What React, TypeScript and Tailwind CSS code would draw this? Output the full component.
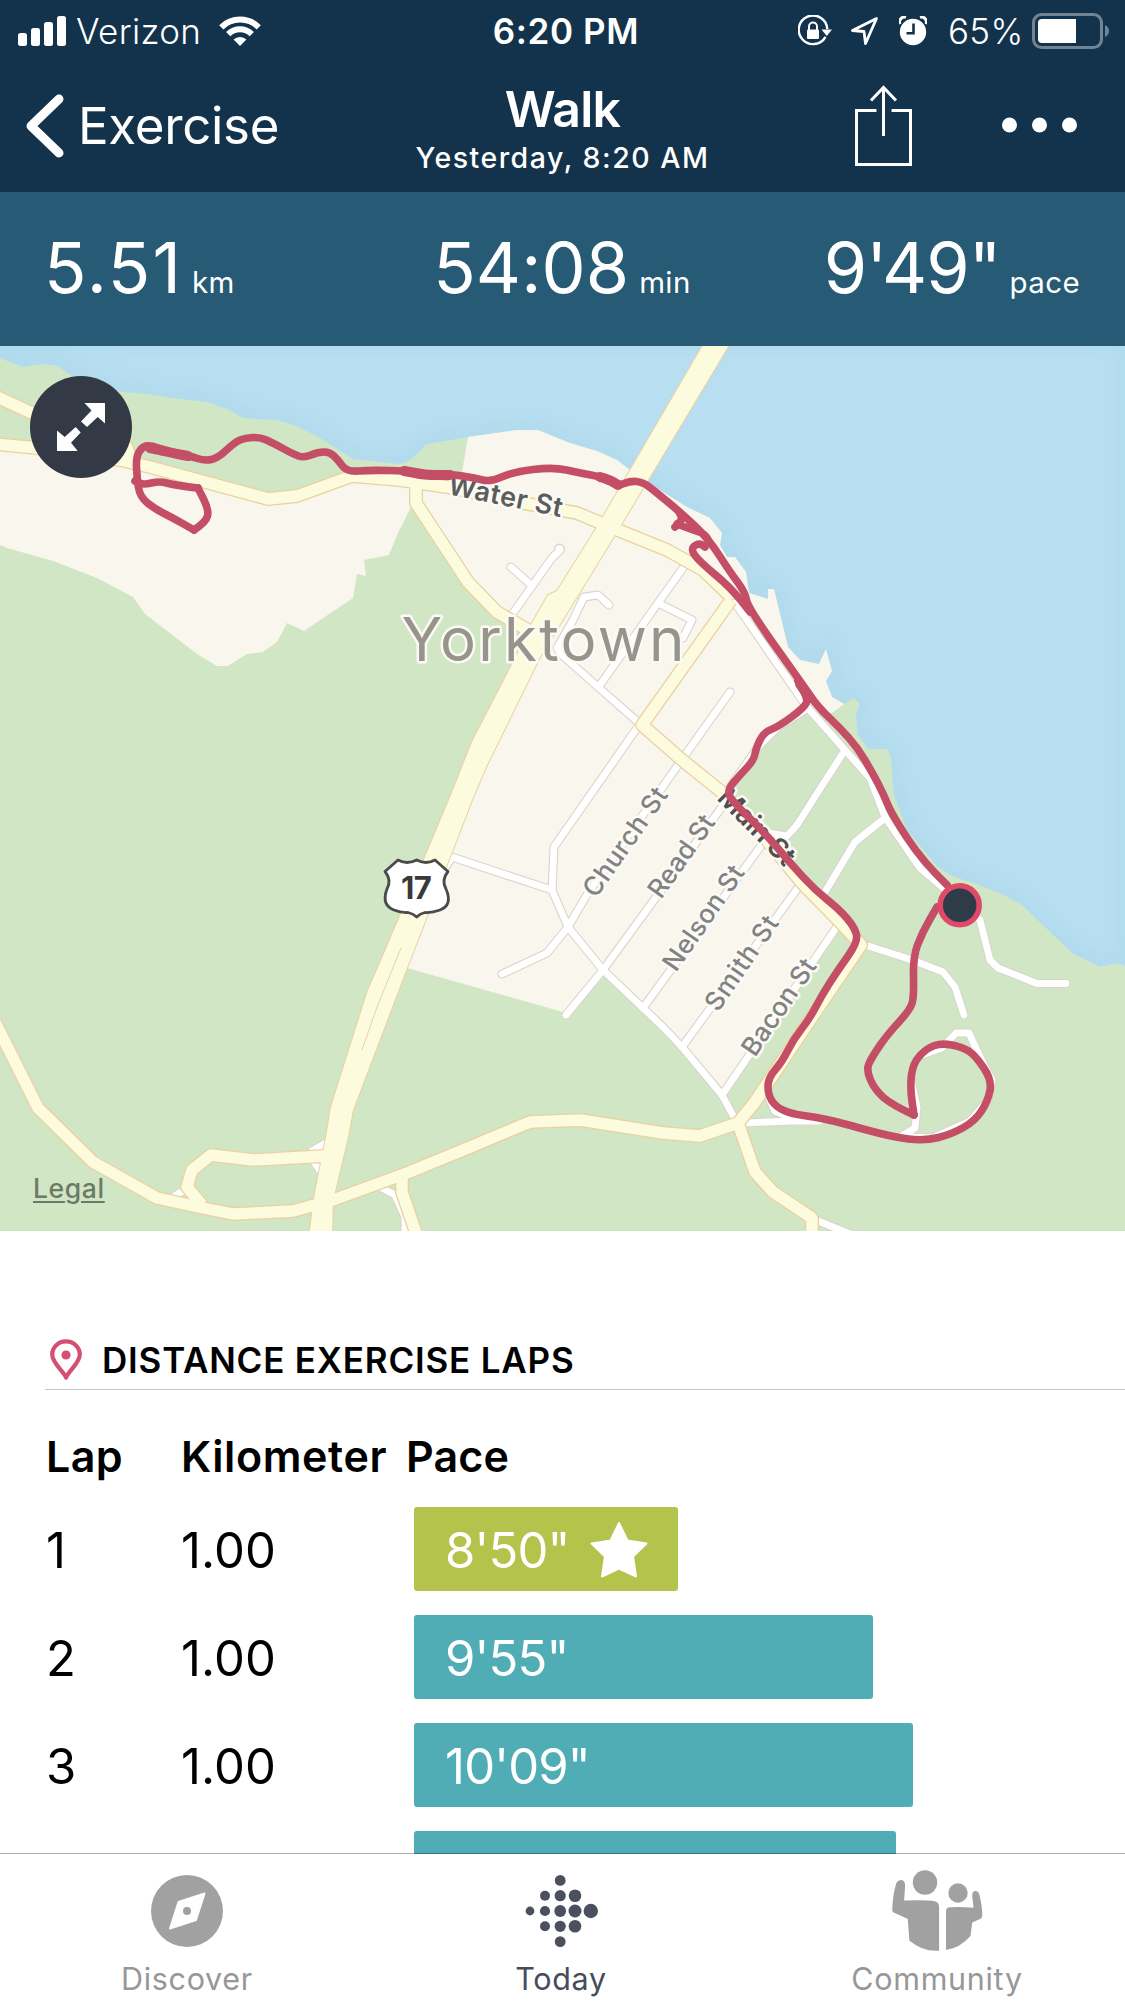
/**
 * Exercise Detail Screen
 * Summary stats, route map and lap splits for a recorded walk
 */

import type { ReactNode } from 'react';

interface Stat {
  value: string;
  unit: string;
  align: string;
  spacing: string;
}

interface Lap {
  lap: number;
  distance: string;
  pace: string;
  width: number;
  best?: boolean;
}

interface StreetLabel {
  name: string;
  x: number;
  y: number;
  angle: number;
  length: number;
}

const STATS: Stat[] = [
  { value: '5.51', unit: 'km', align: 'justify-start', spacing: 'mr-[9px] tracking-[2px]' },
  { value: '54:08', unit: 'min', align: 'justify-center', spacing: 'mr-[10px] tracking-[0.1px]' },
  { value: '9\'49"', unit: 'pace', align: 'justify-end', spacing: 'mr-[9px] tracking-[-0.9px]' },
];

const LAPS: Lap[] = [
  { lap: 1, distance: '1.00', pace: '8\'50"', width: 264, best: true },
  { lap: 2, distance: '1.00', pace: '9\'55"', width: 459 },
  { lap: 3, distance: '1.00', pace: '10\'09"', width: 499 },
];

const WATER =
  'M0 340V358L23 367L43 364L58 366L72 376L123 392L147 394L173 398L208 402L227 409L243 418L277 420L297 426L320 438L353 459L400 464L410 460L427 444L468 437L517 430L538 430L570 443L597 451L617 460L630 470L647 482L687 507L710 518L722 533L720 545L727 557L735 557L746 572L749 593L768 599V589H774L788 647L800 660L819 664L826 649L832 671L826 681L832 697L844 704L854 698L860 703L856 715L858 735L868 749L887 749L891 757L894 795L907 830L922 848L938 867L952 876L982 886L1002 894L1022 905L1045 927L1072 953L1100 967L1117 963L1130 968V340Z';

const TOWN = [
  'M0 445L120 458L268 499L298 495L353 476L412 480V505L398 533L389 555L364 560L366 576L357 574L353 598L304 631L287 623L277 642L263 652L247 654L228 666H217L197 654L145 614L133 597L97 578L53 561L7 548L0 545Z',
  'M468 437L517 430L538 430L570 443L597 451L617 460L630 470L647 482L687 507L710 518L722 533L720 545L727 557L735 557L746 572L749 593L768 599V589H774L788 647L800 660L819 664L826 649L832 671L826 681L832 697L844 704L832 713L808 710L778 730L758 748L728 790L765 840L838 927L722 1096L682 1047L643 1008L605 972L563 1012L407 968L462 795L510 670L526 630L497 612L468 582L417 503V480L462 472Z',
];

const WHITE_ROADS = [
  'M560 550L552 558L513 613',
  'M511 567L530 584',
  'M609 605L598 595L584 597L572 622L557 648L562 655L598 687L638 722',
  'M683 568L658 603L600 685',
  'M658 603L692 620L683 638',
  'M730 692L683 758L588 893L568 927L547 953L502 974',
  'M637 728L554 847L552 890L568 927L603 970L643 1008L663 1027L682 1047L722 1095L737 1123',
  'M440 876L452 857L552 890',
  'M727 800L603 970L566 1015',
  'M763 843L643 1008',
  'M800 885L682 1047',
  'M838 925L722 1095',
  'M735 603L807 707L845 750L870 778L885 817L920 868L942 887L960 902L980 920L990 960L998 968L1037 983.5H1066',
  'M845 750L818 792L797 825L787 836L770 833',
  'M885 818L855 842L825 892',
  'M808 708L778 727L758 747L728 790',
  'M865 945L912 960L943 972L955 987L964 1015',
  'M922 1055L942 1048L956 1033H969L980 1057L992 1080L988 1100L970 1121L932 1138L905 1137',
  'M911 1080L917 1107L915 1128L902 1136',
  'M745 1123L792 1121L820 1121',
  'M768 1096L775 1111L792 1118',
  'M818 1221L850 1234',
  'M173 1197L188 1188',
  'M312 1151L326 1143M312 1159L321 1172',
  'M378 1186L395 1195L405 1217V1236',
];

const YELLOW_ROADS = [
  'M-5 396L60 426L118 428L132 460',
  'M-5 444L37 448L120 460L150 467L268 499L297 496L352 476L400 480L447 487L523 503L577 513L603 524L667 550L703 570L731 597',
  'M731 600L642 725L682 760L723 793L765 838L802 883L840 922L861 945L808 1023L755 1102L738 1123L700 1136L663 1133L580 1120L530 1122L463 1150L407 1173L333 1200L293 1211L233 1214L203 1208L157 1198L93 1162L38 1108L-5 1022',
  'M738 1123L755 1172L773 1192L812 1218V1238',
  'M325 1156L253 1160L211 1155L192 1170L187 1187L202 1205',
  'M402 1177V1192L417 1236',
  'M416 485V503L468 582L497 612L528 630',
];

const HIGHWAY =
  'M706 340L597 527L557 591L548 595L532 623L518 653L472 742L451 795L425 857L380 963L368 990L331 1107L326 1137L315 1193L309 1236H332L333 1200L348 1137L353 1110L407 968L474 795L487 765L540 657L615 535L732 340Z';

// GPS traces, as plain x y pairs
const TRACKS = [
  '947 885 923 862 892 815 883 793 872 772 857 747 840 728 818 707 805 688 748 608 745 592 730 572 708 538 680 512 657 493 643 482 630 481 618 486 602 477 580 473 553 467 513 472 490 482 475 478 450 474 430 475 407 471 370 470 347 472 338 460 330 452 318 452 304 458 293 454 273 443 260 437 245 438 235 442 218 458 205 461 190 456 167 451 150 445 142 447 136 457 137 478 140 497 155 509 173 518 194 530',
  '194 530 206 522 209 510 198 488',
  '198 488 173 485 160 481 143 485 135 481',
  '675 527 683 520 679 512',
  '677 524 693 530 705 534 709 542',
  '705 547 700 542 690 549 700 562 730 587 750 612',
  '798 681 808 698 805 707 778 727 764 732 756 748 754 760 740 775 727 790 732 801 765 833 791 864 815 890 840 910 855 928 858 942 838 970 822 995 810 1018 793 1040 782 1062 768 1078 768 1095 776 1107 792 1114 815 1117 838 1122 892 1137 925 1141 952 1134 975 1121 988 1101 992 1080 975 1055 962 1047 942 1043 927 1048 913 1063 910 1087 914 1115',
  '914 1115 892 1105 875 1090 866 1070 872 1057 887 1035 910 1010 914 997 913 957 922 933 937 907',
];

// Stretches where the trace doubles up on itself
const OVERLAPS = ['150 448 160 450 172 453 188 456', '404 471 420 474 430 475 450 475', '600 477 610 480 618 485', '800 684 804 690 810 698'];

const STREETS: StreetLabel[] = [
  { name: 'Church St', x: 596, y: 899, angle: -55, length: 127 },
  { name: 'Read St', x: 661, y: 900, angle: -54.5, length: 95 },
  { name: 'Nelson St', x: 676, y: 973, angle: -55.2, length: 122 },
  { name: 'Smith St', x: 718, y: 1013, angle: -55.5, length: 109 },
  { name: 'Bacon St', x: 755, y: 1058, angle: -55.8, length: 111 },
];

// Rounds the corners of a trace by curving through segment midpoints
function smoothPath(track: string): string {
  const nums = track.split(' ').map(Number);
  const pts: [number, number][] = [];
  for (let i = 0; i < nums.length; i += 2) pts.push([nums[i], nums[i + 1]]);

  let d = `M${pts[0][0]} ${pts[0][1]}`;
  for (let i = 1; i < pts.length - 1; i++) {
    const [x, y] = pts[i];
    const [nx, ny] = pts[i + 1];
    d += `Q${x} ${y} ${(x + nx) / 2} ${(y + ny) / 2}`;
  }
  const last = pts[pts.length - 1];
  return `${d}L${last[0]} ${last[1]}`;
}

function StatusBar() {
  return (
    <div className="flex h-[62px] items-center text-[35px]">
      <div className="flex w-[400px] items-center pl-[18px]">
        <svg width="48" height="30" viewBox="0 0 48 30" fill="white">
          <rect x="0" y="17" width="9" height="13" rx="2.5" />
          <rect x="13" y="12" width="9" height="18" rx="2.5" />
          <rect x="26" y="6" width="9" height="24" rx="2.5" />
          <rect x="39" y="0" width="9" height="30" rx="2.5" />
        </svg>
        <span className="ml-[10px] w-[143px] font-[350] tracking-[0.3px]">Verizon</span>
        <svg width="42" height="30" viewBox="0 0 42 30" fill="none" stroke="white" strokeWidth="6">
          <path d="M2.3 11.3A26.5 26.5 0 0 1 39.7 11.3" />
          <path d="M9.2 18.2A16.7 16.7 0 0 1 32.8 18.2" />
          <path d="M21 30L14.6 23.6A9.2 9.2 0 0 1 27.4 23.6Z" fill="white" stroke="none" />
        </svg>
      </div>
      <div className="flex-1 pl-[7px] text-center font-[560] tracking-[0.6px]">6:20 PM</div>
      <div className="flex w-[400px] items-center justify-end pr-[15px]">
        <svg width="34" height="32" viewBox="0 0 34 32">
          <path d="M27.5 21.8A14.3 14.3 0 1 1 29.3 14" fill="none" stroke="white" strokeWidth="2.4" />
          <path d="M23.5 14.5H34L28.8 21Z" fill="white" />
          <rect x="9" y="14.5" width="12" height="9.5" rx="1" fill="white" />
          <path d="M11 15V11.5A4 4 0 0 1 19 11.5V15" fill="none" stroke="white" strokeWidth="2" />
        </svg>
        <svg className="ml-[18px]" width="29" height="30" viewBox="0 0 29 30">
          <path
            d="M26.5 2.5L2.5 14.5L14 15.5L15.5 27.5Z"
            fill="none"
            stroke="white"
            strokeWidth="2.8"
            strokeLinejoin="round"
          />
        </svg>
        <svg className="ml-[20px]" width="28" height="30" viewBox="0 0 28 30">
          <circle cx="14" cy="16" r="13.2" fill="white" />
          <path d="M1 8A5 5 0 0 1 7 1.2" fill="none" stroke="white" strokeWidth="3" />
          <path d="M27 8A5 5 0 0 0 21 1.2" fill="none" stroke="white" strokeWidth="3" />
          <path d="M14.5 7.5V17.2H7.5" fill="none" stroke="#13324b" strokeWidth="2.6" />
        </svg>
        <span className="ml-[21px] w-[84px] font-[350] tracking-[0.3px]">65%</span>
        <svg width="78" height="36" viewBox="0 0 78 36">
          <rect x="1.5" y="1.5" width="68" height="33" rx="8" fill="none" stroke="#718493" strokeWidth="3" />
          <path d="M73 12Q77 14 77 18T73 24Z" fill="#718493" />
          <path d="M10 6H44V30H10Q6 30 6 26V10Q6 6 10 6Z" fill="white" />
        </svg>
      </div>
    </div>
  );
}

function NavBar() {
  return (
    <div className="flex h-[130px] items-center pb-[2px]">
      <div className="flex w-[375px] items-center pl-[26px]">
        <svg width="38" height="64" viewBox="0 0 38 64" fill="none">
          <path d="M33 5L5 32L33 59" stroke="white" strokeWidth="9" strokeLinecap="round" strokeLinejoin="round" />
        </svg>
        <span className="-mt-px ml-[14px] text-[51px] leading-[60px] font-[380] tracking-[-0.3px]">Exercise</span>
      </div>
      <div className="flex w-[375px] flex-col items-center pt-[11px]">
        <span className="text-[50px] leading-[52px] font-[580] tracking-[-0.8px]">Walk</span>
        <span className="text-[28.5px] leading-[45px] font-[540] tracking-[1.5px]">Yesterday, 8:20 AM</span>
      </div>
      <div className="flex w-[375px] items-center pl-[105px]">
        <svg width="58" height="82" viewBox="0 0 58 82" fill="none" stroke="white" strokeWidth="3">
          <path d="M21.5 25.5H1.5V79.5H55.5V25.5H36.5" />
          <path d="M28.5 51V3M16 15.5L28.5 2.5L41 15.5" />
        </svg>
        <svg className="-mt-[3px] ml-[89px]" width="76" height="16" viewBox="0 0 76 16" fill="white">
          <circle cx="7.5" cy="8" r="7.5" />
          <circle cx="37.5" cy="8" r="7.5" />
          <circle cx="67.5" cy="8" r="7.5" />
        </svg>
      </div>
    </div>
  );
}

function StatsBar() {
  return (
    <div className="grid h-[154px] grid-cols-3 bg-[#265a75] pr-[45px] pl-[44px] pt-[26px] text-white">
      {STATS.map((stat) => (
        <div key={stat.unit} className={`flex items-baseline ${stat.align}`}>
          <span className={`text-[70px] leading-[100px] font-[380] ${stat.spacing}`}>{stat.value}</span>
          <span className="text-[29.5px] font-[370] tracking-[0.4px]">{stat.unit}</span>
        </div>
      ))}
    </div>
  );
}

function RouteMap() {
  return (
    <div className="relative h-[885px] w-full">
      <svg className="block" width="1125" height="885" viewBox="0 346 1125 885">
        <defs>
          <filter id="shore" x="-5%" y="-5%" width="110%" height="110%">
            <feGaussianBlur stdDeviation="10" />
          </filter>
          <clipPath id="waterClip">
            <path d={WATER} />
          </clipPath>
        </defs>
        <rect x="0" y="346" width="1125" height="885" fill="#d0e6c4" />
        <path d={WATER} fill="#b8dff1" />
        <g clipPath="url(#waterClip)">
          <path d={WATER} fill="none" stroke="#a9d5ea" strokeOpacity="0.7" strokeWidth="16" filter="url(#shore)" />
        </g>
        {TOWN.map((d) => (
          <path key={d} d={d} fill="#f9f6ee" />
        ))}

        {/* Minor roads */}
        <g fill="none" strokeLinejoin="round" strokeLinecap="round">
          {WHITE_ROADS.map((d) => (
            <path key={d} d={d} stroke="#d9d5cd" strokeWidth="9" />
          ))}
          <circle cx="559.5" cy="549" r="4" stroke="#d9d5cd" strokeWidth="3" />
          {WHITE_ROADS.map((d) => (
            <path key={d} d={d} stroke="white" strokeWidth="6.8" />
          ))}
          <circle cx="559.5" cy="549" r="4" fill="white" />
        </g>

        {/* Main roads and highway */}
        <g fill="none" strokeLinejoin="round">
          {YELLOW_ROADS.map((d) => (
            <path key={d} d={d} stroke="#ead1a0" strokeWidth="14" />
          ))}
          <path d={HIGHWAY} stroke="#ead1a0" strokeWidth="2" />
          {YELLOW_ROADS.map((d) => (
            <path key={d} d={d} stroke="#fdfbdd" strokeWidth="11.4" />
          ))}
          <path d={HIGHWAY} fill="#fdfbdd" />
          <path d="M401 948L377 1007L362 1050" stroke="#ead1a0" strokeWidth="1" />
        </g>

        {/* Labels */}
        <g stroke="#fbfaf5" strokeWidth="5" strokeLinejoin="round" paintOrder="stroke">
          <text x="401.5" y="660.5" fontSize="60" fontWeight="440" fill="#97948c" textLength="283">
            Yorktown
          </text>
          <text
            transform="translate(447 494) rotate(11.5)"
            fontSize="27"
            fontWeight="600"
            fill="#5c5c5c"
            textLength="116"
          >
            Water St
          </text>
          <text
            transform="translate(716 799) rotate(45)"
            fontSize="27"
            fontWeight="600"
            fill="#505050"
            textLength="97"
          >
            Main St
          </text>
          {STREETS.map((street) => (
            <text
              key={street.name}
              transform={`translate(${street.x} ${street.y}) rotate(${street.angle})`}
              fontSize="26"
              fontWeight="450"
              fill="#828282"
              textLength={street.length}
            >
              {street.name}
            </text>
          ))}
        </g>

        {/* Recorded track */}
        <g fill="none" stroke="#c34e65" strokeWidth="7.6" strokeLinejoin="round" strokeLinecap="round">
          {TRACKS.map((track) => (
            <path key={track} d={smoothPath(track)} />
          ))}
          {OVERLAPS.map((track) => (
            <path key={track} d={smoothPath(track)} strokeWidth="10" />
          ))}
        </g>
        <circle cx="959.7" cy="905.3" r="19.5" fill="#303b49" stroke="#dd4a6a" strokeWidth="5.5" />

        {/* US 17 shield */}
        <path
          d="M398 860Q407 865 416.7 860Q426 865 435 860L448 871.5Q441 880 446 889Q453 905 440 910Q432 913 425 912.5Q420 913.5 416.7 917Q413 913.5 408 912.5Q401 913 394 910Q381 905 387 889Q392 880 385 871.5Z"
          fill="white"
          stroke="#4a4a4a"
          strokeWidth="2.8"
          strokeLinejoin="round"
        />
        <text x="416" y="898.5" fontSize="31" fontWeight="700" fill="#3a3a3a" textAnchor="middle" letterSpacing="-0.6">
          17
        </text>
      </svg>

      <button className="absolute top-[30px] left-[30px] h-[102px] w-[102px] rounded-full bg-[#333945]">
        <svg width="102" height="102" viewBox="30 376 102 102" fill="white">
          <path d="M84.5 403H105V423.5L97.7 417L87 427L81 421.5L91.5 410.5Z" />
          <path d="M57 451V430.5L64.7 437L75.7 427L80.7 432.5L71 442.7L77.7 451Z" />
        </svg>
      </button>
      <a className="absolute bottom-[24px] left-[33px] text-[26.5px] leading-[38px] font-medium tracking-[0.6px] text-[#6c7a67] underline decoration-2 underline-offset-[3px]">
        Legal
      </a>
    </div>
  );
}

function LapRow({ lap }: { lap: Lap }) {
  return (
    <div className="flex h-[84px] shrink-0 items-center text-[49px] leading-[84px] text-black">
      <span className="w-[135px] pt-[3px] pl-px">{lap.lap}</span>
      <span className="w-[234px] pt-[3px] pl-px tracking-[0.1px]">{lap.distance}</span>
      <div
        className={`flex h-[84px] items-center rounded-[3px] pl-[31px] text-white ${
          lap.best ? 'bg-[#b3c34b]' : 'bg-[#50adb6]'
        }`}
        style={{ width: lap.width }}
      >
        <span className="pt-[3px] font-[380] tracking-[-0.8px]">{lap.pace}</span>
        {lap.best && (
          <svg className="mt-[2px] ml-[20px]" width="58" height="58" viewBox="0 0 58 58">
            <path
              d="M29 2L37.5 19.5L56.5 22.5L43 35.5L46 55.5L29 47.5L12 55.5L15 35.5L1.5 22.5L20.5 19.5Z"
              fill="white"
              stroke="white"
              strokeWidth="2"
              strokeLinejoin="round"
            />
          </svg>
        )}
      </div>
    </div>
  );
}

function LapsSection() {
  return (
    <section className="flex h-[623px] flex-col overflow-hidden bg-white pt-[100px] pl-[45px]">
      <div className="flex h-[59px] shrink-0 items-center border-b border-[#c6c6c6] pl-[5px]">
        <svg width="32" height="42" viewBox="0 0 32 42">
          <path
            d="M16 38.5C12.5 31 2.2 24 2.2 15.6A13.8 13.3 0 0 1 29.8 15.6C29.8 24 19.5 31 16 38.5Z"
            fill="none"
            stroke="#d54f72"
            strokeWidth="4.2"
            strokeLinejoin="round"
          />
          <circle cx="16" cy="16" r="4.6" fill="#d54f72" />
        </svg>
        <h2 className="ml-[20px] text-[35px] leading-[40px] font-[560] tracking-[0.8px] text-black">
          DISTANCE EXERCISE LAPS
        </h2>
      </div>
      <div className="mt-[35px] mb-[20px] flex shrink-0 text-[43px] leading-[62px] font-[580] text-black">
        <span className="w-[135px] pl-px tracking-[0.4px]">Lap</span>
        <span className="w-[226px] pl-px tracking-[0.6px]">Kilometer</span>
        <span className="tracking-[0.1px]">Pace</span>
      </div>
      <div className="flex flex-col gap-6">
        {LAPS.map((lap) => (
          <LapRow key={lap.lap} lap={lap} />
        ))}
        {/* Top of the next bar, peeking out above the tab bar */}
        <div className="ml-[369px] h-[84px] w-[482px] shrink-0 rounded-[3px] bg-[#50adb6]" />
      </div>
    </section>
  );
}

function Tab({ label, active, children }: { label: string; active?: boolean; children: ReactNode }) {
  return (
    <div className={`flex w-[374px] flex-col items-center ${active ? 'text-[#474c5c]' : 'text-[#979797]'}`}>
      <svg width="92" height="84" viewBox="-46 -42 92 84">
        {children}
      </svg>
      <span className="mt-[6px] text-[30.5px] leading-[40px] font-[380] tracking-[0.7px]">{label}</span>
    </div>
  );
}

function TabBar() {
  return (
    <nav className="relative -mt-px flex h-[148px] border-t border-black/30 bg-white bg-clip-padding pt-[15px]">
      <Tab label="Discover">
        <circle cx="0" cy="0" r="36" fill="#a1a1a1" />
        <path
          d="M17.5 -17.5L9 9L-17 17.5L-8.5 -9Z"
          fill="white"
          stroke="white"
          strokeWidth="2"
          strokeLinejoin="round"
        />
        <circle cx="0" cy="0" r="4" fill="#a1a1a1" />
      </Tab>
      <Tab label="Today" active>
        <g fill="#4a505e">
          <circle cx="-31" cy="0" r="4.4" />
          <circle cx="-16" cy="-15.3" r="5" />
          <circle cx="-16" cy="0" r="5.1" />
          <circle cx="-16" cy="15.3" r="5" />
          <circle cx="-0.8" cy="-30.6" r="5.4" />
          <circle cx="-0.8" cy="-15.3" r="5.6" />
          <circle cx="-0.8" cy="0" r="5.9" />
          <circle cx="-0.8" cy="15.3" r="5.6" />
          <circle cx="-0.8" cy="30.6" r="5.4" />
          <circle cx="14" cy="-15.3" r="6.3" />
          <circle cx="14" cy="0" r="6.5" />
          <circle cx="14" cy="15.3" r="6.3" />
          <circle cx="29.8" cy="0" r="7.2" />
        </g>
      </Tab>
      <div className="w-[2px]" />
      <Tab label="Community">
        <g fill="#a1a1a1">
          <circle cx="-12" cy="-28.5" r="12.2" />
          <circle cx="21" cy="-18" r="9.7" />
          <path d="M-44.8 -1Q-44.2 -17 -40.7 -28Q-38.7 -31.5 -35.2 -31Q-31.7 -30 -31.9 -25L-32.9 -10.4Q-11.2 -11.5 -2.2 -9.8Q2.1 -9 2.1 -3.5V39.7Q-14.2 41 -27.7 29.5L-29.2 8L-41.2 2.5Q-45 1 -44.8 -1Z" />
          <path d="M9 39V0Q9 -3.5 13 -3.8Q23 -4.5 36.5 -3.2L35.2 -15Q35 -20 38.5 -20Q41.5 -20 42.5 -16Q45.5 -3 45.3 5Q45.3 7 43 8L35.2 11.5L33.5 25Q23 37 9 39Z" />
        </g>
      </Tab>
    </nav>
  );
}

export default function App() {
  return (
    <div className="flex h-[2001px] w-[1125px] flex-col overflow-hidden bg-white font-['Inter','Liberation_Sans',sans-serif]">
      <header className="bg-[#13324b] text-white">
        <StatusBar />
        <NavBar />
      </header>
      <StatsBar />
      <RouteMap />
      <LapsSection />
      <TabBar />
    </div>
  );
}
